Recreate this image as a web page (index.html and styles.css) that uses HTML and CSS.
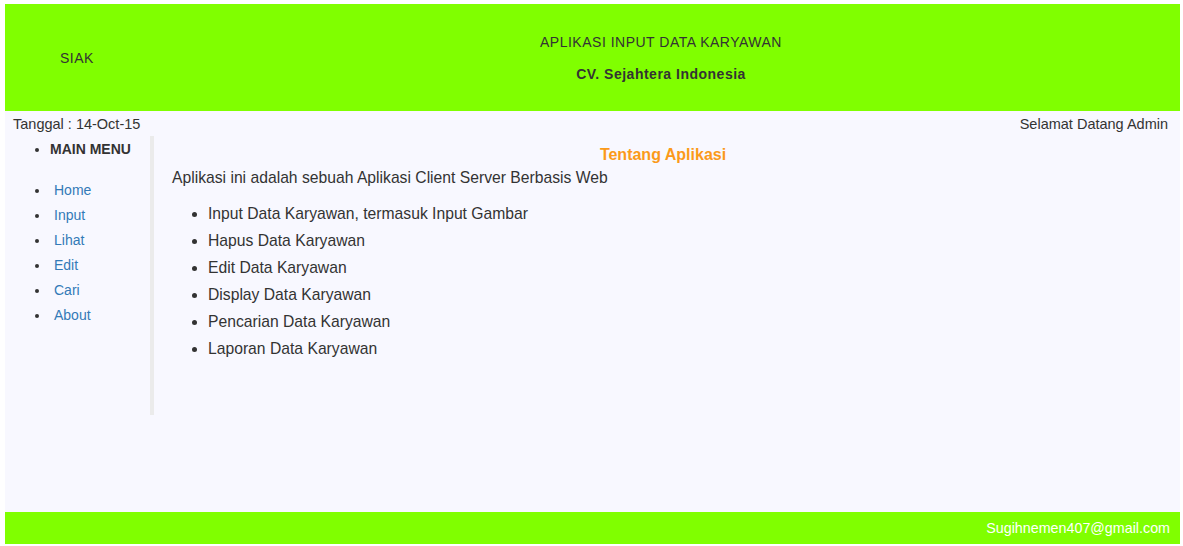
FILE: index.html
```html
<!DOCTYPE html>
<html>
<head>
<meta charset="utf-8">
<title>Aplikasi Input Data Karyawan</title>
<link rel="stylesheet" href="styles.css">
</head>
<body>
<div class="page">
  <header class="header">
    <div class="brand">SIAK</div>
    <div class="title">
      <p class="title-main">APLIKASI INPUT DATA KARYAWAN</p>
      <p class="title-sub">CV. Sejahtera Indonesia</p>
    </div>
  </header>
  <main class="main">
    <div class="topbar">
      <span>Tanggal : 14-Oct-15</span>
      <span>Selamat Datang Admin</span>
    </div>
    <div class="body">
      <nav class="sidebar">
        <ul class="menu-head"><li>MAIN MENU</li></ul>
        <ul class="menu">
          <li><a href="#">Home</a></li>
          <li><a href="#">Input</a></li>
          <li><a href="#">Lihat</a></li>
          <li><a href="#">Edit</a></li>
          <li><a href="#">Cari</a></li>
          <li><a href="#">About</a></li>
        </ul>
      </nav>
      <section class="content">
        <h3 class="content-title">Tentang Aplikasi</h3>
        <p class="intro">Aplikasi ini adalah sebuah Aplikasi Client Server Berbasis Web</p>
        <ul class="features">
          <li>Input Data Karyawan, termasuk Input Gambar</li>
          <li>Hapus Data Karyawan</li>
          <li>Edit Data Karyawan</li>
          <li>Display Data Karyawan</li>
          <li>Pencarian Data Karyawan</li>
          <li>Laporan Data Karyawan</li>
        </ul>
      </section>
    </div>
  </main>
  <footer class="footer">Sugihnemen407@gmail.com</footer>
</div>
</body>
</html>
```
FILE: styles.css
```css
html, body {
  margin: 0;
  padding: 0;
  background: #ffffff;
}
body {
  font-family: "Liberation Sans", Arial, sans-serif;
  font-size: 14px;
  line-height: 20px;
  color: #333333;
}
.page {
  padding: 4px 3px 2px 5px;
}
.header {
  height: 107px;
  background: #80ff00;
  display: flex;
  letter-spacing: 0.5px;
}
.brand {
  width: 82px;
  padding-left: 55px;
  align-self: center;
  font-size: 14px;
}
.title {
  flex: 1;
  text-align: center;
  padding-top: 28px;
}
.title p {
  margin: 0;
}
.title-main {
  font-size: 14px;
}
.title-sub {
  font-size: 14px;
  font-weight: bold;
  margin-top: 12px !important;
}
.main {
  height: 401px;
  background: #f8f8ff;
  display: flex;
  flex-direction: column;
}
.topbar {
  display: flex;
  justify-content: space-between;
  padding: 3px 12px 0 8px;
  height: 22px;
  font-size: 14.5px;
}
.body {
  display: flex;
  align-items: flex-start;
}
.sidebar {
  width: 145px;
  height: 279px;
  border-right: 4px solid #ebebeb;
}
.sidebar ul {
  margin: 0;
  padding-left: 45px;
}
.menu-head {
  font-weight: bold;
  padding-top: 3px;
}
.menu {
  margin-top: 19px !important;
}
.menu li {
  line-height: 25px;
}
.menu a {
  color: #337ab7;
  text-decoration: none;
  padding-left: 4px;
}
.content {
  flex: 1;
  padding: 0 26px 0 18px;
}
.content-title {
  margin: 9px 0 0;
  text-align: center;
  font-size: 16px;
  line-height: 20px;
  color: #fb9a1a;
  font-weight: bold;
}
.intro {
  margin: 2px 0 0;
  font-size: 15.7px;
  line-height: 22px;
}
.features {
  margin: 11px 0 0;
  padding-left: 36px;
  font-size: 15.7px;
  line-height: 27px;
}
.footer {
  height: 32px;
  line-height: 32px;
  background: #80ff00;
  color: #ffffff;
  text-align: right;
  padding-right: 10px;
  font-size: 14.3px;
}
```
